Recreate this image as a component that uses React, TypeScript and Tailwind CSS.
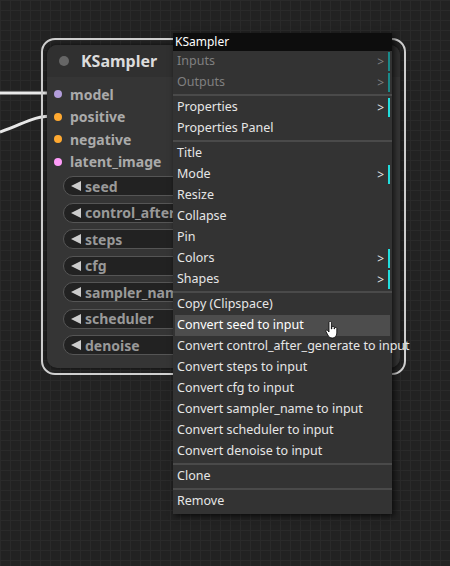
import React from "react";

const inputs = [
  { name: "model", color: "bg-[#b39ddb]" },
  { name: "positive", color: "bg-[#ffa931]" },
  { name: "negative", color: "bg-[#ffa931]" },
  { name: "latent_image", color: "bg-[#ff9cf9]" },
];

const widgets = ["seed", "control_after_generate", "steps", "cfg", "sampler_name", "scheduler", "denoise"];

type Item = { label: string; sub?: boolean; disabled?: boolean; active?: boolean } | "sep";

const menu: Item[] = [
  { label: "Inputs", sub: true, disabled: true },
  { label: "Outputs", sub: true, disabled: true },
  "sep",
  { label: "Properties", sub: true },
  { label: "Properties Panel" },
  "sep",
  { label: "Title" },
  { label: "Mode", sub: true },
  { label: "Resize" },
  { label: "Collapse" },
  { label: "Pin" },
  { label: "Colors", sub: true },
  { label: "Shapes", sub: true },
  "sep",
  { label: "Copy (Clipspace)" },
  { label: "Convert seed to input", active: true },
  { label: "Convert control_after_generate to input" },
  { label: "Convert steps to input" },
  { label: "Convert cfg to input" },
  { label: "Convert sampler_name to input" },
  { label: "Convert scheduler to input" },
  { label: "Convert denoise to input" },
  "sep",
  { label: "Clone" },
  "sep",
  { label: "Remove" },
];

export default function App() {
  return (
    <div className="relative w-[450px] h-[566px] overflow-hidden bg-[#222222] bg-[linear-gradient(#2a2a2a_1px,transparent_1px),linear-gradient(90deg,#2a2a2a_1px,transparent_1px)] bg-[size:10px_10px] font-['Lato','Noto_Sans',sans-serif]">
      {/* wires */}
      <svg className="absolute left-0 top-0" width="60" height="160">
        <path d="M0 93 L56 93" stroke="#e8e8e8" strokeWidth="3" fill="none" />
        <path d="M0 132 C25 124 30 116 56 116" stroke="#e8e8e8" strokeWidth="3" fill="none" />
      </svg>

      {/* node selection outline */}
      <div className="absolute left-[41px] top-[38px] w-[365px] h-[337px] rounded-[14px] border-2 border-[#cfcfcf]" />

      {/* node */}
      <div className="absolute left-[47px] top-[45px] w-[353px] h-[323px] rounded-[10px] bg-[#353535] shadow-[0_0_4px_rgba(0,0,0,0.6)] overflow-hidden">
        <div className="flex items-center h-[32px] bg-[#303030] pl-[12px] gap-[12px]">
          <div className="w-[10px] h-[10px] rounded-full bg-[#666]" />
          <span className="text-[16px] font-bold text-[#dcdcdc]">KSampler</span>
        </div>
        <div className="flex flex-col pt-[6px]">
          {inputs.map((i) => (
            <div key={i.name} className="flex items-center h-[22.5px] pl-[7px] gap-[8px]">
              <div className={`w-[8px] h-[8px] rounded-full ${i.color}`} />
              <span className="text-[14px] font-bold text-[#aaaaaa]">{i.name}</span>
            </div>
          ))}
        </div>
        <div className="flex flex-col gap-[6.5px] pt-[3px] pl-[16px] pr-[16px]">
          {widgets.map((w) => (
            <div key={w} className="flex items-center h-[20px] rounded-full border border-[#555] bg-[#222222] pl-[7px] gap-[4px] whitespace-nowrap">
              <svg width="10" height="10" viewBox="0 0 10 10">
                <path d="M0 5 L10 0 L10 10 Z" fill="#cccccc" />
              </svg>
              <span className="text-[14px] font-bold text-[#999999]">{w}</span>
            </div>
          ))}
        </div>
      </div>

      {/* context menu */}
      <div className="absolute left-[173px] top-[33px] w-[219px] bg-[#333333] shadow-[2px_2px_6px_rgba(0,0,0,0.7)] pb-[2px]">
        <div className="h-[18px] bg-[#0d0d0d] text-[12px] text-white pl-[2px] leading-[18px]">KSampler</div>
        {menu.map((m, idx) =>
          m === "sep" ? (
            <div key={idx} className="h-[4px] flex items-center">
              <div className="w-full h-[2px] bg-[#4a4a4a]" />
            </div>
          ) : (
            <div
              key={idx}
              className={`relative flex items-center h-[21px] mx-[2px] pl-[2px] text-[12.5px] whitespace-nowrap ${
                m.disabled ? "text-[#808080]" : "text-[#e6e6e6]"
              } ${m.active ? "bg-[#4d4d4d] text-white" : ""}`}
            >
              {m.label}
              {m.active && (
                <svg className="absolute left-[150px] top-[6px]" width="14" height="18" viewBox="0 0 14 18">
                  <path
                    d="M4 1.5 a1.2 1.2 0 0 1 2.4 0 V8 h0.4 V6.5 a1.2 1.2 0 0 1 2.4 0 V8 h0.3 V7.3 a1.2 1.2 0 0 1 2.3 0 V12 c0 3 -2 5 -4.5 5 c-2 0 -3.5 -1 -4.5 -3 L1 10.5 c-0.5 -1 0.8 -2 1.6 -1 L4 11 Z"
                    fill="#fff"
                    stroke="#000"
                    strokeWidth="0.8"
                  />
                </svg>
              )}
              {m.sub && (
                <>
                  <span className="absolute right-[6px] text-[12px]">&gt;</span>
                  <div className={`absolute right-0 top-[1px] w-[2px] h-[19px] ${m.disabled ? "bg-[#1a8a8a]" : "bg-[#22dddd]"}`} />
                </>
              )}
            </div>
          )
        )}
      </div>
    </div>
  );
}
